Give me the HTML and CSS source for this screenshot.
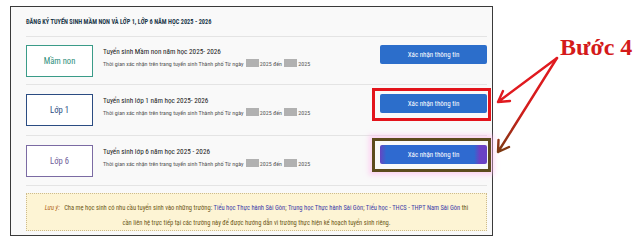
FILE: index.html
```html
<html><head>
<meta name="viewport" content="width=device-width, initial-scale=1">
<link rel="stylesheet" href="styles.css"></head><body>

<div class="page">
  <div class="frame">
    <div class="head">ĐĂNG KÝ TUYỂN SINH MẦM NON VÀ LỚP 1, LỚP 6 NĂM HỌC 2025 - 2026</div>

    <div class="row">
      <div class="level teal">Mầm non</div>
      <div class="info">
        <div class="info-title">Tuyển sinh Mầm non năm học 2025- 2026</div>
        <div class="info-time">Thời gian xác nhận trên trang tuyển sinh Thành phố Từ ngày <span class="blank"></span>2025 đến <span class="blank"></span>2025</div>
      </div>
      <div class="action"><button class="confirm">Xác nhận thông tin</button></div>
    </div>

    <div class="row">
      <div class="level navy">Lớp 1</div>
      <div class="info">
        <div class="info-title">Tuyển sinh lớp 1 năm học 2025- 2026</div>
        <div class="info-time">Thời gian xác nhận trên trang tuyển sinh Thành phố Từ ngày <span class="blank"></span>2025 đến <span class="blank"></span>2025</div>
      </div>
      <div class="action mark-red"><button class="confirm">Xác nhận thông tin</button></div>
    </div>

    <div class="row">
      <div class="level purple">Lớp 6</div>
      <div class="info">
        <div class="info-title">Tuyển sinh lớp 6 năm học 2025 - 2026</div>
        <div class="info-time">Thời gian xác nhận trên trang tuyển sinh Thành phố Từ ngày <span class="blank"></span>2025 đến <span class="blank"></span>2025</div>
      </div>
      <div class="action mark-olive"><button class="confirm violet">Xác nhận thông tin</button></div>
    </div>

    <div class="note">
      <span class="note-label">Lưu ý:</span>&nbsp;&nbsp; Cha mẹ học sinh có nhu cầu tuyển sinh vào những trường: <a href="#">Tiểu học Thực hành Sài Gòn</a>; <a href="#">Trung học Thực hành Sài Gòn</a>; <a href="#">Tiểu học - THCS - THPT Nam Sài Gòn</a> thì<br>
      cần liên hệ trực tiếp tại các trường này để được hướng dẫn vì trường thực hiện kế hoạch tuyển sinh riêng.
    </div>
  </div>

  <div class="step">Bước 4</div>
</div>

<svg class="arrows" width="641" height="245" viewBox="0 0 641 245">
  <defs>
    <linearGradient id="arrowFade" x1="0" y1="0" x2="0" y2="1">
      <stop offset="0" stop-color="#e01a1f"/>
      <stop offset="0.55" stop-color="#d41c1c"/>
      <stop offset="1" stop-color="#7a3a12"/>
    </linearGradient>
  </defs>
  <g fill="none" stroke-width="2.4" stroke-linecap="round" stroke-linejoin="round">
    <path d="M557 58 L498 102 M498 102 L510 101 M498 102 L503 91" stroke="#e01a1f"/>
    <path d="M557 58 L498 152 M498 152 L509 147 M498 152 L498.5 140" stroke="url(#arrowFade)"/>
  </g>
</svg>

</body></html>
```

FILE: styles.css
```css
body {margin: 0; background: #fff; font-family: "Liberation Sans Narrow", "Roboto Condensed", Roboto, Arial, sans-serif;}

.page {display: flex; align-items: flex-start; padding-top: 6px;}

.frame {
    margin-left: 10px;
    padding: 0 3px 0 15px;
    box-sizing: border-box;
    width: 483px;
    height: 230px;
    border: 1px solid #3a3a3a;
    background: #f9f9f9;
}

.head {
    height: 29px;
    line-height: 31px;
    margin-right: 2px;
    font-size: 6.3px;
    font-weight: 700;
    color: #1e3a4c;
    border-bottom: 1px solid #e4e4e4;
}

.row {
    display: flex;
    align-items: flex-start;
    height: 48px;
    padding-top: 8px;
    box-sizing: border-box;
    margin-right: 2px;
    border-bottom: 1px solid #e4e4e4;
}
.row + .row {height: 51px; padding-top: 9px;}
.row + .row + .row {height: 50px;}

.level {
    width: 67px;
    height: 32px;
    box-sizing: border-box;
    display: flex;
    align-items: center;
    justify-content: center;
    background: #fff;
    border: 1.5px solid;
    font-size: 8.6px;
    flex: none;
}
.teal {border-color: #3a9b88; color: #2f8f7c;}
.navy {border-color: #2b4c82; color: #2b4c82;}
.purple {border-color: #7b6ba3; color: #6e5c99;}

.info {flex: 1; margin-left: 10px; padding-top: 1px;}
.info-title {font-size: 7.2px; line-height: 11px; color: #222;}
.info-time {font-size: 6px; line-height: 10px; margin-top: 2px; color: #555;}
.blank {
    display: inline-block;
    width: 13px;
    height: 8px;
    vertical-align: middle;
    background: #b1b1b1;
    margin: -2px 1px 0 1px;
}

.action {
    margin: -6px -4px 0 0;
    padding: 3px 1px 5px 5px;
    border: 3px solid transparent;
    flex: none;
}
.mark-red {border-color: #e3141b;}
.mark-olive {
    margin-top: -7px;
    padding-top: 4px;
    border-color: #5c4a1c;
    box-shadow: 0 0 5px 3px rgba(255, 180, 235, 0.55);
}

.confirm {
    display: block;
    width: 107px;
    height: 19px;
    border: none;
    border-radius: 2px;
    background-color: #2c6ecb;
    color: #fff;
    font-family: inherit;
    font-size: 7px;
    cursor: pointer;
}
.violet {background: linear-gradient(90deg, #6546c2 0, #2f6ad0 6%, #2f6ad0 88%, #6a42c4 93%, #6a42c4 100%);}

.note {
    margin: 7px 2px 0 0;
    height: 38px;
    box-sizing: border-box;
    padding-top: 7px;
    border: 1px dotted #cdbb8c;
    background: #fdf4d4;
    text-align: center;
    font-size: 6.5px;
    line-height: 15px;
    color: #6c5716;
}
.note-label {font-style: italic; color: #b06417;}
.note a {color: #3c3ca8; text-decoration: none;}

.step {
    margin: 29px 0 0 67px;
    font-family: "Liberation Serif", "Times New Roman", serif;
    font-weight: 700;
    font-size: 24px;
    line-height: 24px;
    color: #d41a1a;
    white-space: nowrap;
}

.arrows {position: absolute; top: 0; left: 0; pointer-events: none;}
```
